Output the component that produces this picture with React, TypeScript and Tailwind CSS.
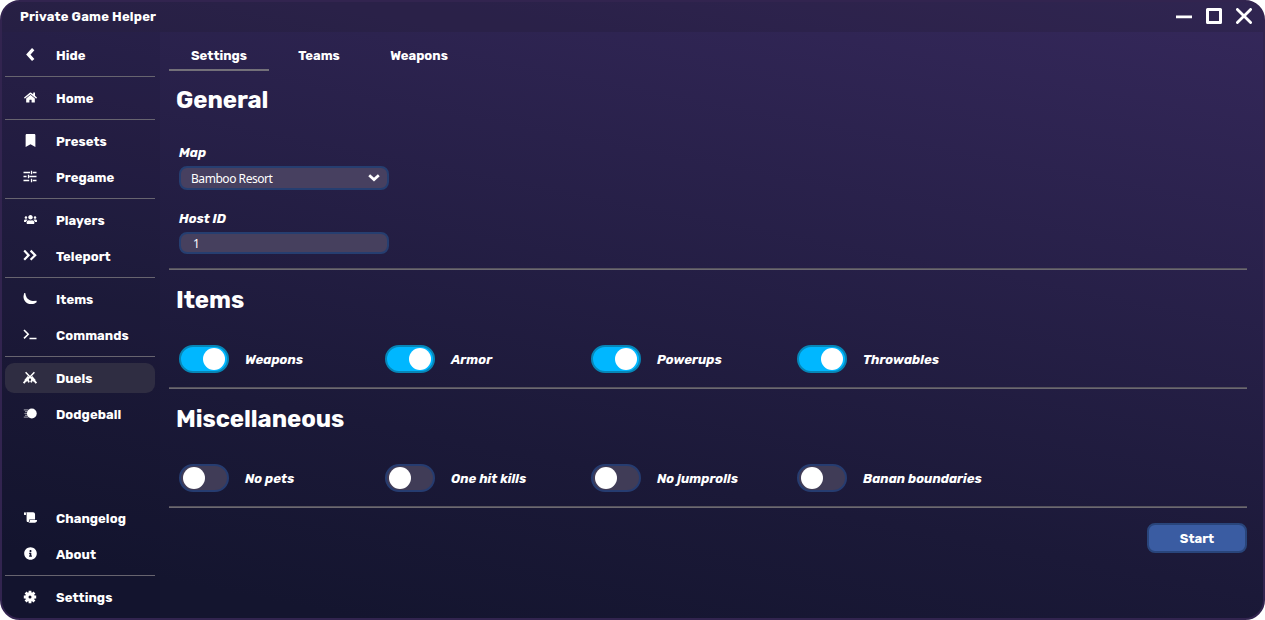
import React, { useState } from "react";
import type { ReactNode } from "react";
import { FaBookmark, FaInfoCircle, FaScroll, FaHome, FaUsers } from "react-icons/fa";

const Stroke = ({ d, width = 2 }: { d: string; width?: number }) => (
  <svg viewBox="0 0 14 14" className="h-3.5 w-3.5" fill="none" stroke="currentColor" strokeWidth={width}>
    <path d={d} />
  </svg>
);

const Banana = () => (
  <svg viewBox="0 0 14 14" className="h-3.5 w-3.5" fill="currentColor">
    <path d="M1.2 1 2.4 1.2C2.8 5.8 5.6 8.6 10 8.9L13.6 8.7V10.3C12 11.8 9.9 12.2 8 12.1 3.4 11.8.3 8.5.5 4.2Z" />
  </svg>
);

const Rifles = () => (
  <svg viewBox="0 0 14 14" className="h-3.5 w-3.5" fill="none" stroke="currentColor">
    <path d="M2.6 1.2 10.4 9.4M11.4 1.2 3.6 9.4" strokeWidth="1.5" />
    <path d="M2.4 9.8 5.8 5.8M11.6 9.8 8.2 5.8" strokeWidth="2.8" />
    <path d="M4.6 8 6 11.4M9.4 8 8 11.4M.7 12.2 3.2 9M13.3 12.2 10.8 9" strokeWidth="1.9" />
  </svg>
);

const Ball = () => (
  <svg viewBox="0 0 14 14" className="h-3.5 w-3.5" fill="currentColor">
    <circle cx="8.8" cy="6.5" r="4.9" />
    <path d="M.8 2.8H5.4M2 4.6H4.5M1.4 6.5H4M2 8.4H4.5M.8 10.2H5.4" stroke="currentColor" strokeWidth="1.2" opacity=".5" />
  </svg>
);

const Gear = () => (
  <svg viewBox="0 0 14 14" className="h-3.5 w-3.5">
    <path d="M7 .8V13.2M.8 7H13.2M2.6 2.6 11.4 11.4M11.4 2.6 2.6 11.4" stroke="currentColor" strokeWidth="2.8" />
    <circle cx="7" cy="7" r="4.7" fill="currentColor" />
    <circle cx="7" cy="7" r="1.5" fill="#17162f" />
  </svg>
);

type Entry = { label: string; icon: ReactNode };

const groups: Entry[][] = [
  [{ label: "Hide", icon: <Stroke d="M10.2 1.2 5.3 6.6 10.2 12" width={3.2} /> }],
  [{ label: "Home", icon: <FaHome size={13} /> }],
  [
    { label: "Presets", icon: <FaBookmark size={13} /> },
    {
      label: "Pregame",
      icon: <Stroke d="M.5 2.5H7M9.8 2.5H13.5M8.5 .7V4.3M.5 6.5H3.6M6.4 6.5H13.5M5.5 4.7V8.3M.5 10.5H6.2M9.8 10.5H13.5M8.5 8.7V12.3" width={1.3} />,
    },
  ],
  [
    { label: "Players", icon: <FaUsers size={13} /> },
    { label: "Teleport", icon: <Stroke d="M1.2 1.6 5.6 6.2 1.2 10.8M7.6 1.6 12.2 6.2 7.6 10.8" width={2.2} /> },
  ],
  [
    { label: "Items", icon: <Banana /> },
    { label: "Commands", icon: <Stroke d="M1 2 5.2 6.2 1 10.4M6.5 10.5H13.5" width={1.6} /> },
  ],
  [
    { label: "Duels", icon: <Rifles /> },
    { label: "Dodgeball", icon: <Ball /> },
  ],
];

const footer: Entry[][] = [
  [
    { label: "Changelog", icon: <FaScroll size={13} /> },
    { label: "About", icon: <FaInfoCircle size={13} /> },
  ],
  [{ label: "Settings", icon: <Gear /> }],
];

function NavGroups({ items, active, onSelect }: { items: Entry[][]; active: string; onSelect: (s: string) => void }) {
  return (
    <>
      {items.map((group, i) => (
        <React.Fragment key={group[0].label}>
          {i > 0 && <div className="h-px w-full bg-[#67646f]" />}
          {group.map(({ label, icon }) => (
            <button
              key={label}
              onClick={() => onSelect(label)}
              className={`flex h-[30px] w-full items-center rounded-[9px] pl-[18px] ${active === label ? "bg-[#2f2d42]" : ""}`}
            >
              <span className="flex w-[14px] justify-center pb-px">{icon}</span>
              <span className="ml-[19px] pt-0.5 tracking-[0.05px]">{label}</span>
            </button>
          ))}
        </React.Fragment>
      ))}
    </>
  );
}

function Toggle({ label, initial }: { label: string; initial: boolean }) {
  const [on, setOn] = useState(initial);
  return (
    <div className="flex h-7 w-[206px] items-center">
      <button
        role="switch"
        aria-checked={on}
        onClick={() => setOn(!on)}
        className={`flex h-7 w-[50px] shrink-0 items-center rounded-full border-2 ${
          on ? "justify-end border-[#0786b7] bg-[#00b7ff] pr-0.5" : "border-[#263c70] bg-[#403c57] pl-0.5"
        }`}
      >
        <span className="h-[22px] w-[22px] rounded-full bg-white" />
      </button>
      <span className="ml-4 pt-0.5 whitespace-nowrap italic">{label}</span>
    </div>
  );
}

const Rule = () => <div className="h-0.5 border-t border-[#55525c] bg-[#6c6972]" />;

const Heading = ({ children }: { children: ReactNode }) => (
  <h2 className="pl-[7px] text-2xl leading-8 font-bold tracking-[-0.08px]">{children}</h2>
);

export default function App() {
  const [active, setActive] = useState("Duels");
  const [tab, setTab] = useState("Settings");
  return (
    <div className="h-[620px] w-[1265px] bg-white">
      <div className="flex h-full flex-col overflow-hidden rounded-[20px] border-2 border-[#32244f] bg-linear-[11deg,#14152f_8%,#1b1938_31%,#35285b_100%] font-['Rubik','Inter',sans-serif] text-[13px] font-bold text-white">
        <header className="flex h-[30px] shrink-0 items-start justify-between bg-[#1c1a28]/20 pr-[11px] pl-[18px]">
          <span className="pt-[5px] tracking-[0.2px]">Private Game Helper</span>
          <svg width="76" height="16" viewBox="0 0 76 16" fill="none" stroke="white" className="mt-1.5">
            <path d="M0 8.8H16" strokeWidth="2.8" />
            <rect x="31.5" y="1.5" width="13" height="13" strokeWidth="3" strokeLinejoin="round" />
            <path d="m61.4 1.4 13.2 13.2M74.6 1.4 61.4 14.6" strokeWidth="2.8" strokeLinecap="round" />
          </svg>
        </header>
        <div className="flex min-h-0 flex-1">
          <nav className="flex w-[158px] shrink-0 flex-col justify-between bg-[#15152b]/10 pt-2 pr-[5px] pb-1.5 pl-[3px]">
            <div className="flex flex-col gap-1.5">
              <NavGroups items={groups} active={active} onSelect={setActive} />
            </div>
            <div className="flex flex-col gap-1.5">
              <NavGroups items={footer} active={active} onSelect={setActive} />
            </div>
          </nav>
          <main className="flex min-w-0 flex-1 flex-col pt-2 pr-4 pl-[9px]">
            <div className="flex h-[31px]">
              {["Settings", "Teams", "Weapons"].map((name) => (
                <button
                  key={name}
                  onClick={() => setTab(name)}
                  className={`h-[31px] w-[100px] border-b-2 pt-[3px] ${tab === name ? "border-[#737079]" : "border-transparent"}`}
                >
                  {name}
                </button>
              ))}
            </div>
            <section className="flex h-[197px] flex-col pt-[13px]">
              <Heading>General</Heading>
              <label className="mt-[27px] ml-2.5 h-5 leading-5 italic">Map</label>
              <button className="mt-[3px] ml-2.5 flex h-6 w-[210px] shrink-0 items-center justify-between rounded-lg border-2 border-[#263e70] bg-[#474060] pr-[7px] pl-2.5 font-['Noto_Sans',sans-serif] text-xs font-normal">
                <span className="pt-0.5 tracking-[-0.45px]">Bamboo Resort</span>
                <svg width="12" height="8" viewBox="0 0 12 8" fill="none" stroke="white" strokeWidth="2.7">
                  <path d="m1.2 1.2 4.8 4.4 4.8-4.4" />
                </svg>
              </button>
              <label className="mt-[19px] ml-2.5 h-5 leading-5 italic">Host ID</label>
              <input
                defaultValue="1"
                className="mt-[3px] ml-2.5 h-[22px] w-[210px] shrink-0 rounded-lg border-2 border-[#263e70] bg-[#46405e] pl-3 font-['Noto_Sans',sans-serif] text-xs font-normal outline-none"
              />
            </section>
            <Rule />
            <section className="h-[117px] pt-[14px]">
              <Heading>Items</Heading>
              <div className="mt-[29px] flex pl-2.5">
                {["Weapons", "Armor", "Powerups", "Throwables"].map((name) => (
                  <Toggle key={name} label={name} initial />
                ))}
              </div>
            </section>
            <Rule />
            <section className="h-[117px] pt-[14px]">
              <Heading>Miscellaneous</Heading>
              <div className="mt-[29px] flex pl-2.5">
                {["No pets", "One hit kills", "No jumprolls", "Banan boundaries"].map((name) => (
                  <Toggle key={name} label={name} initial={false} />
                ))}
              </div>
            </section>
            <Rule />
            <button className="mt-[15px] h-[30px] w-[100px] self-end rounded-lg border-2 border-[#29457b] bg-[#3a5ca2] pt-0.5">
              Start
            </button>
          </main>
        </div>
      </div>
    </div>
  );
}
